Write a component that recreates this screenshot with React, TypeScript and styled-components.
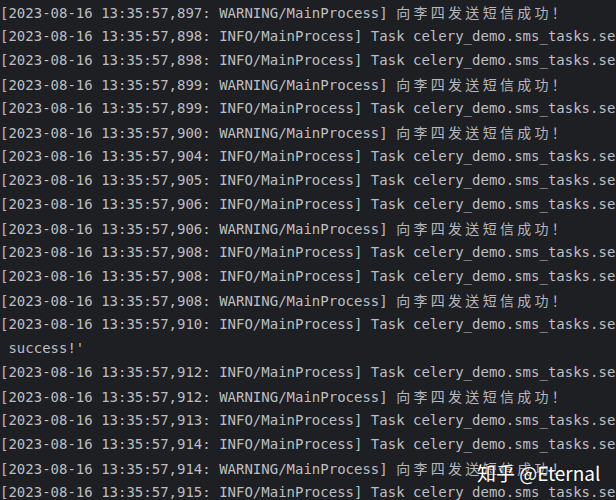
import React from "react";
import styled, { createGlobalStyle } from "styled-components";

const Global = createGlobalStyle`
  html, body { margin: 0; padding: 0; background: #1e1f22; }
  body { width: 616px; height: 500px; overflow: hidden; }
`;

const Console = styled.div`
  position: relative;
  width: 616px;
  height: 500px;
  overflow: hidden;
  background: #1e1f22;
  color: #bcbec4;
  font-family: "DejaVu Sans Mono", "Noto Sans CJK SC", monospace;
  font-size: 14px;
`;

const Lines = styled.div`
  display: flex;
  flex-direction: column;
`;

const Line = styled.div`
  height: 24px;
  line-height: 24px;
  white-space: pre;
  overflow: hidden;
`;

const Cjk = styled.span`
  font-family: "Noto Sans CJK SC", sans-serif;
  font-size: 14px;
  letter-spacing: 3.3px;
  color: #b4b6bc;
`;

const Watermark = styled.div`
  position: absolute;
  left: 477px;
  top: 458px;
  color: #ffffff;
  font-family: "Noto Sans CJK SC", "Noto Sans", sans-serif;
  font-size: 19px;
  line-height: 30px;
  white-space: pre;
  text-shadow: 0 0 2px rgba(0, 0, 0, 0.5);
`;

type Row =
  | { kind: "info"; ms: string }
  | { kind: "warn"; ms: string }
  | { kind: "cont"; text: string };

const rows: Row[] = [
  { kind: "warn", ms: "897" },
  { kind: "info", ms: "898" },
  { kind: "info", ms: "898" },
  { kind: "warn", ms: "899" },
  { kind: "info", ms: "899" },
  { kind: "warn", ms: "900" },
  { kind: "info", ms: "904" },
  { kind: "info", ms: "905" },
  { kind: "info", ms: "906" },
  { kind: "warn", ms: "906" },
  { kind: "info", ms: "908" },
  { kind: "info", ms: "908" },
  { kind: "warn", ms: "908" },
  { kind: "info", ms: "910" },
  { kind: "cont", text: " success!'" },
  { kind: "info", ms: "912" },
  { kind: "warn", ms: "912" },
  { kind: "info", ms: "913" },
  { kind: "info", ms: "914" },
  { kind: "warn", ms: "914" },
  { kind: "info", ms: "915" },
];

export default function App() {
  return (
    <>
      <Global />
      <Console>
        <Lines>
          {rows.map((r, i) => {
            if (r.kind === "cont") return <Line key={i}>{r.text}</Line>;
            const prefix = `[2023-08-16 13:35:57,${r.ms}: `;
            if (r.kind === "warn")
              return (
                <Line key={i}>
                  {prefix}WARNING/MainProcess] <Cjk>向李四发送短信成功！</Cjk>
                </Line>
              );
            return (
              <Line key={i}>
                {prefix}INFO/MainProcess] Task celery_demo.sms_tasks.send_sms_task[succeeded]
              </Line>
            );
          })}
        </Lines>
        <Watermark>知乎 @Eternal</Watermark>
      </Console>
    </>
  );
}
